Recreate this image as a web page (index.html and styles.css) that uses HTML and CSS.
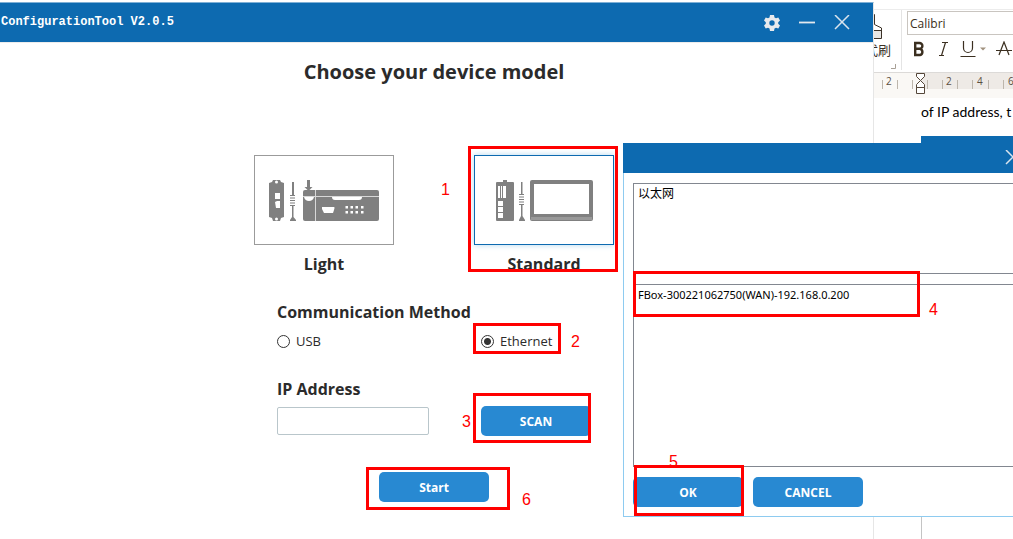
FILE: index.html
```html
<!DOCTYPE html>
<html lang="en">
<head>
<meta charset="utf-8">
<title>ConfigurationTool V2.0.5</title>
<link rel="stylesheet" href="styles.css">
</head>
<body>
<div class="desktop">

  <section class="word" aria-label="Document editor">
    <div class="ribbon">
      <div class="clipboard-group">
        <svg class="painter" viewBox="0 0 12 26" width="12" height="26" aria-hidden="true"><path d="M0 17h8v7H0z" fill="#e6e6e4"/><path d="M0 .5h1.500v10l7 3.500v10.500H0M0 16.500h8" fill="none" stroke="#3b3127"/></svg>
        <span class="painter-label">式刷</span>
        <svg class="launcher" viewBox="0 0 5 5" width="5" height="5" aria-hidden="true"><path d="M0 4.500h4.500V0" fill="none" stroke="#a8a096"/></svg>
      </div>
      <div class="font-group">
        <input class="font-name" type="text" value="Calibri" aria-label="Font name">
        <div class="font-buttons">
          <button class="fmt" type="button" aria-label="Bold"><svg viewBox="0 0 14 16" width="14" height="16"><path d="M3.200 2v12h4.800a3.200 3.200 0 0 0 0-6.200H3.200h4.300a2.900 2.900 0 0 0 0-5.800z" fill="none" stroke="#3b2f20" stroke-width="2.400"/></svg></button>
          <button class="fmt" type="button" aria-label="Italic"><svg viewBox="0 0 14 16" width="14" height="16"><path d="M6 1.500h6M3 14.500h5M9.500 1.500l-4 13" fill="none" stroke="#3b2f20" stroke-width="1.200"/></svg></button>
          <button class="fmt wide" type="button" aria-label="Underline"><svg viewBox="0 0 26 16" width="26" height="16"><path d="M3.500 0v7a4.500 4.500 0 0 0 9 0V0M.5 15.500h15" fill="none" stroke="#3b2f20" stroke-width="1.200"/><path d="M20 6.500h6l-3 3z" fill="#a1927f"/></svg></button>
          <button class="fmt" type="button" aria-label="Strikethrough"><svg viewBox="0 0 16 16" width="16" height="16"><path d="M3 14L8 1l5 13M0 9.500h16" fill="none" stroke="#3b2f20" stroke-width="1.200"/></svg></button>
        </div>
      </div>
    </div>
    <div class="ruler">
      <svg viewBox="0 0 140 25" width="140" height="25" aria-hidden="true">
        <path d="M48 0h92v16H48z" fill="#eeeae6"/>
        <path d="M9.500 7v9M24.500 7v9M39.500 7v9M54.500 7v9M69.500 7v9M84.500 7v9M99.500 7v9M115.500 7v9M130.500 7v9" stroke="#bdb6ac" fill="none"/>
        <g fill="#5b4e40" font-family="Open Sans, sans-serif" font-size="10"><text x="13" y="12">2</text><text x="73" y="12">2</text><text x="104" y="12">4</text><text x="135" y="12">6</text></g>
        <path d="M43.500 .5h8v3l-4 4-4-4zM47.500 7.500l4 4v3h-8v-3zM43.500 14.500h8v6h-8z" fill="#fff" stroke="#55473a"/>
      </svg>
    </div>
    <div class="page">
      <p class="page-text">of IP address, t</p>
      <div class="page-figure"></div>
    </div>
  </section>

  <main class="tool">
    <header class="titlebar">
      <span class="title">ConfigurationTool V2.0.5</span>
      <div class="window-buttons">
        <button class="win-btn" type="button" aria-label="Settings"><svg viewBox="0 0 16 16" width="16" height="16"><path fill="#e8eaed" fill-rule="evenodd" d="M6 0h4l.5 2.400 1.500.8L14.300 2.400l1.700 3.200-1.800 1.600v1.600l1.800 1.600-1.700 3.200-2.300-.8-1.500.8L10 16H6l-.5-2.400-1.500-.8-2.300.8L0 10.400l1.800-1.600V7.200L0 5.600l1.700-3.200 2.300.8 1.500-.8zM8 5.300a2.700 2.700 0 1 0 0 5.400 2.700 2.700 0 0 0 0-5.400z"/></svg></button>
        <button class="win-btn" type="button" aria-label="Minimize"><svg viewBox="0 0 16 16" width="16" height="16"><path d="M0 7.500h16" stroke="#e3e8ee" stroke-width="1.800"/></svg></button>
        <button class="win-btn" type="button" aria-label="Close"><svg viewBox="0 0 16 16" width="16" height="16"><path d="M1 0l14 14M15 0L1 14" stroke="#d9e4ee" stroke-width="1.500"/></svg></button>
      </div>
    </header>

    <div class="tool-body">
      <h1 class="heading">Choose your device model</h1>

      <div class="models">
        <div class="model">
          <button class="card" type="button" aria-labelledby="light-label">
            <svg viewBox="0 0 138 88" width="138" height="88" aria-hidden="true">
              <g fill="#808080">
                <path d="M18 24h7l1 2 3 1v34l-3 1-1 3h-7l-1-3-3-1V27l3-1z"/>
                <path d="M37 26h2v13h-2zM35 39h5v1h-5zM35 41.500h5v1h-5zM35 44h5v1h-5zM35 46.500h5v1h-5zM35 49h5v1h-5zM37 50h1.500v11l2.500 3v1h-6v-1l2-3zM52 24h3v7h2.500l-4 4-4-4H52z"/>
                <path d="M50 34h72q2 0 2 2v27q0 2-2 2H50q-2 0-2-2V36q0-2 2-2z"/>
              </g>
              <g fill="#fff"><path d="M20 37h5v6h-5zM20 46l2-1h3v7h-4z"/><circle cx="21.500" cy="26" r="1.500"/><circle cx="21.500" cy="63" r="1.500"/>
                <path d="M49 41h10q-1 4-5 4t-5-4zM77 41h30q0 3-3 3H80q-3 0-3-3zM67 51h12q1 0 0 3l-1 3H69l-2-4z"/>
                <path d="M90.500 50h2.500v2.500h-2.500zM95.500 50h2.500v2.500h-2.500zM100.500 50h2.500v2.500h-2.500zM106 50h2.500v2.500H106zM90.500 55h2.500v2.500h-2.500zM95.500 55h2.500v2.500h-2.500zM100.500 55h2.500v2.500h-2.500zM106 55h2.500v2.500H106z"/></g>
              <path d="M48 40.500h76M60.500 34v31" stroke="#d8d8d8" fill="none"/>
            </svg>
          </button>
          <span class="model-label" id="light-label">Light</span>
        </div>
        <div class="model">
          <button class="card selected" type="button" aria-labelledby="standard-label">
            <svg viewBox="0 0 138 88" width="138" height="88" aria-hidden="true">
              <g fill="#808080">
                <path d="M22 26h6v-2h4v2h6q1 0 1 1v37q0 1-1 1H22q-1 0-1-1V27q0-1 1-1z"/>
                <path d="M46 26h1.500v12H46zM44 38h5v1h-5zM44 40.500h5v1h-5zM44 43h5v1h-5zM44 45.500h5v1h-5zM44 48h5v1h-5zM46 49h1.500v11l2.500 4v1h-6v-1l2-4z"/>
                <path d="M57 24h59q2 0 2 2v37q0 2-2 2H57q-2 0-2-2V26q0-2 2-2z"/>
              </g>
              <g fill="#fff"><path d="M23 30h2v12h-2zM26 30h1v12h-1zM28 30h3v12h-3zM23 45h5v5h-5zM23 51h5v5h-5zM23 57h5v5h-5zM59 28h55v30H59z"/></g>
              <path d="M56 61h61v3H56z" fill="#999"/>
            </svg>
          </button>
          <span class="model-label" id="standard-label">Standard</span>
          <span class="mark mark-1"><b class="num">1</b></span>
        </div>
      </div>

      <form class="settings">
        <h2 class="subheading" id="method">Communication Method</h2>
        <div class="row" role="radiogroup" aria-labelledby="method">
          <label class="option"><input type="radio" name="method">USB</label>
          <label class="option"><input type="radio" name="method" checked>Ethernet<span class="mark mark-2"><b class="num">2</b></span></label>
        </div>
        <label class="subheading" for="ip">IP Address</label>
        <div class="row">
          <input class="ip" id="ip" type="text">
          <span class="marked"><button class="btn" type="button">SCAN</button><span class="mark mark-3"><b class="num">3</b></span></span>
        </div>
        <div class="submit">
          <span class="marked"><button class="btn" type="button">Start</button><span class="mark mark-6"><b class="num">6</b></span></span>
        </div>
      </form>
    </div>
  </main>

  <section class="dialog" role="dialog" aria-label="Select device">
    <header class="dialog-bar">
      <button class="win-btn" type="button" aria-label="Close"><svg viewBox="0 0 16 16" width="16" height="16"><path d="M1 0l14 14M15 0L1 14" stroke="#d9e4ee" stroke-width="1.500"/></svg></button>
    </header>
    <div class="dialog-body">
      <ul class="list adapters"><li>以太网</li></ul>
      <div class="marked">
        <ul class="list devices"><li>FBox-300221062750(WAN)-192.168.0.200</li></ul>
        <span class="mark mark-4"><b class="num">4</b></span>
      </div>
      <div class="actions">
        <span class="marked"><button class="btn" type="button">OK</button><span class="mark mark-5"><b class="num">5</b></span></span>
        <button class="btn" type="button">CANCEL</button>
      </div>
    </div>
  </section>
</div>
</body>
</html>
```
FILE: styles.css
```css
* { box-sizing: border-box; }
body { margin: 0; font-family: "Open Sans", "Noto Sans CJK SC", sans-serif; font-size: 13px; color: #2b2b2b; }
h1, h2, p, ul { margin: 0; padding: 0; }
button { font: inherit; padding: 0; border: 0; background: none; }
svg { display: block; }

.desktop { position: relative; min-height: 100vh; overflow: hidden; background: #fff; }

/* Document editor */
.word { position: absolute; left: 873px; right: 0; top: 0; bottom: 0; display: flex; flex-direction: column; background: #fff; overflow: hidden; }
.ribbon { display: flex; height: 64px; margin-top: 9px; border-top: 1px solid #ececec; border-bottom: 1px solid #dcdad8; }
.clipboard-group { display: flex; flex-direction: column; flex: none; width: 29px; margin-bottom: 2px; border-right: 1px solid #e4e4e4; }
.painter { margin-top: 4px; }
.painter-label { margin-left: -8px; font: 13px/20px "Noto Sans CJK SC", sans-serif; color: #3b3127; white-space: nowrap; }
.launcher { margin: 4px 0 0 18px; }
.font-group { flex: 1; min-width: 0; padding: 1px 0 0 5px; }
.font-name { display: block; width: 150px; height: 24px; padding: 0 2px; border: 1px solid #c9c5c0; font: 12px "Open Sans", sans-serif; color: #3b2f20; }
.font-buttons { display: flex; gap: 10px; padding: 6px 0 0 5px; }
.fmt { flex: none; }
.ruler { height: 25px; background: #faf8f5; }
.ruler svg { overflow: visible; }
.page { flex: 1; margin-left: 48px; border-left: 1px solid #c4c4c4; }
.page-text { margin-left: -1px; padding: 4px 0 14px; background: #fff; font: 14px/20px Lato, sans-serif; color: #000; white-space: nowrap; }
.page-figure { height: 200px; margin-left: -1px; background: #0d6ab0; }

/* Configuration tool window */
.tool { position: absolute; left: 0; top: 2px; bottom: 0; width: 874px; background: #fff; border-top: 1px solid #7fb0d6; border-right: 1px solid #e6e6e6; }
.titlebar { display: flex; align-items: center; justify-content: space-between; height: 40px; padding: 0 23px 0 1px; background: #0d6ab0; border-bottom: 1px solid #ececec; }
.title { padding-bottom: 2px; font: bold 12px "Liberation Mono", monospace; color: #fff; }
.window-buttons { display: flex; gap: 19px; }
.win-btn { display: block; }
.tool-body { display: flex; flex-direction: column; align-items: center; padding: 14px 5px 0 0; }
.heading { font-size: 20px; line-height: 30px; font-weight: 700; }
.models { display: flex; gap: 80px; margin-top: 68px; }
.model { position: relative; display: flex; flex-direction: column; align-items: center; }
.card { width: 140px; height: 90px; background: #fff; border: 1px solid #9b9b9b; }
.card.selected { border-color: #0d6ab0; box-shadow: 0 0 6px #b5d8f0; }
.model-label { margin-top: 7px; font-size: 16px; line-height: 24px; font-weight: 700; }
.settings { display: flex; flex-direction: column; width: 314px; margin-top: 24px; }
.subheading { font-size: 16px; line-height: 24px; font-weight: 700; }
.row { display: grid; grid-template-columns: 152px 110px; column-gap: 52px; align-items: center; min-height: 30px; }
h2 + .row { margin: 2px 0 21px; }
label + .row { margin-top: 5px; }
.option { position: relative; display: flex; align-items: center; gap: 6px; font-size: 13px; line-height: 20px; }
.option input { appearance: none; width: 13px; height: 13px; margin: 0; border: 1px solid #333; border-radius: 50%; background: #fff; }
.option input:checked { background: radial-gradient(circle, #333 3px, #fff 4px); }
.ip { width: 152px; height: 28px; border: 1px solid #b9c6cb; border-radius: 2px; }
.btn { display: block; width: 110px; height: 30px; border-radius: 5px; background: #2889d2; color: #fff; font-size: 12px; font-weight: 700; }
.submit { display: flex; justify-content: center; margin-top: 36px; }

/* Device dialog */
.dialog { position: absolute; left: 623px; right: -30px; top: 143px; background: #fff; border: 1px solid #8ecbf0; border-top: 0; }
.dialog-bar { display: flex; align-items: center; justify-content: flex-end; height: 30px; margin-left: -1px; padding-right: 21px; background: #0d6ab0; }
.dialog-body { display: flex; flex-direction: column; gap: 10px; padding: 10px 9px 9px; }
.list { list-style: none; padding: 1px 4px; background: #fff; border: 1px solid #828790; font-size: 12px; line-height: 17px; color: #000; }
.adapters { height: 91px; }
.devices { height: 183px; font-family: "Noto Sans", sans-serif; font-size: 11px; }
.actions { display: flex; gap: 10px; }

/* Numbered step marks */
.marked { position: relative; display: block; }
.mark { position: absolute; border: 3px solid #f00; pointer-events: none; }
.num { position: absolute; font: 16px/16px "Liberation Sans", sans-serif; color: #f00; }
.mark-1 { left: -6px; right: -4px; top: -9px; height: 126px; }
.mark-1 .num { left: -30px; top: 33px; }
.mark-2 { left: -8px; width: 88px; top: -8px; height: 31px; }
.mark-2 .num { left: 95px; top: 8px; }
.mark-3 { left: -8px; right: 0; top: -13px; bottom: -7px; }
.mark-3 .num { left: -14px; top: 18px; }
.mark-4 { left: 0; width: 287px; top: -13px; height: 46px; }
.mark-4 .num { left: 293px; top: 28px; }
.mark-5 { left: 1px; right: -1px; top: -12px; bottom: -9px; }
.mark-5 .num { left: 32px; top: -14px; height: 11px; overflow: hidden; }
.mark-6 { left: -13px; right: -21px; top: -5px; bottom: -8px; }
.mark-6 .num { left: 153px; top: 22px; }
```
